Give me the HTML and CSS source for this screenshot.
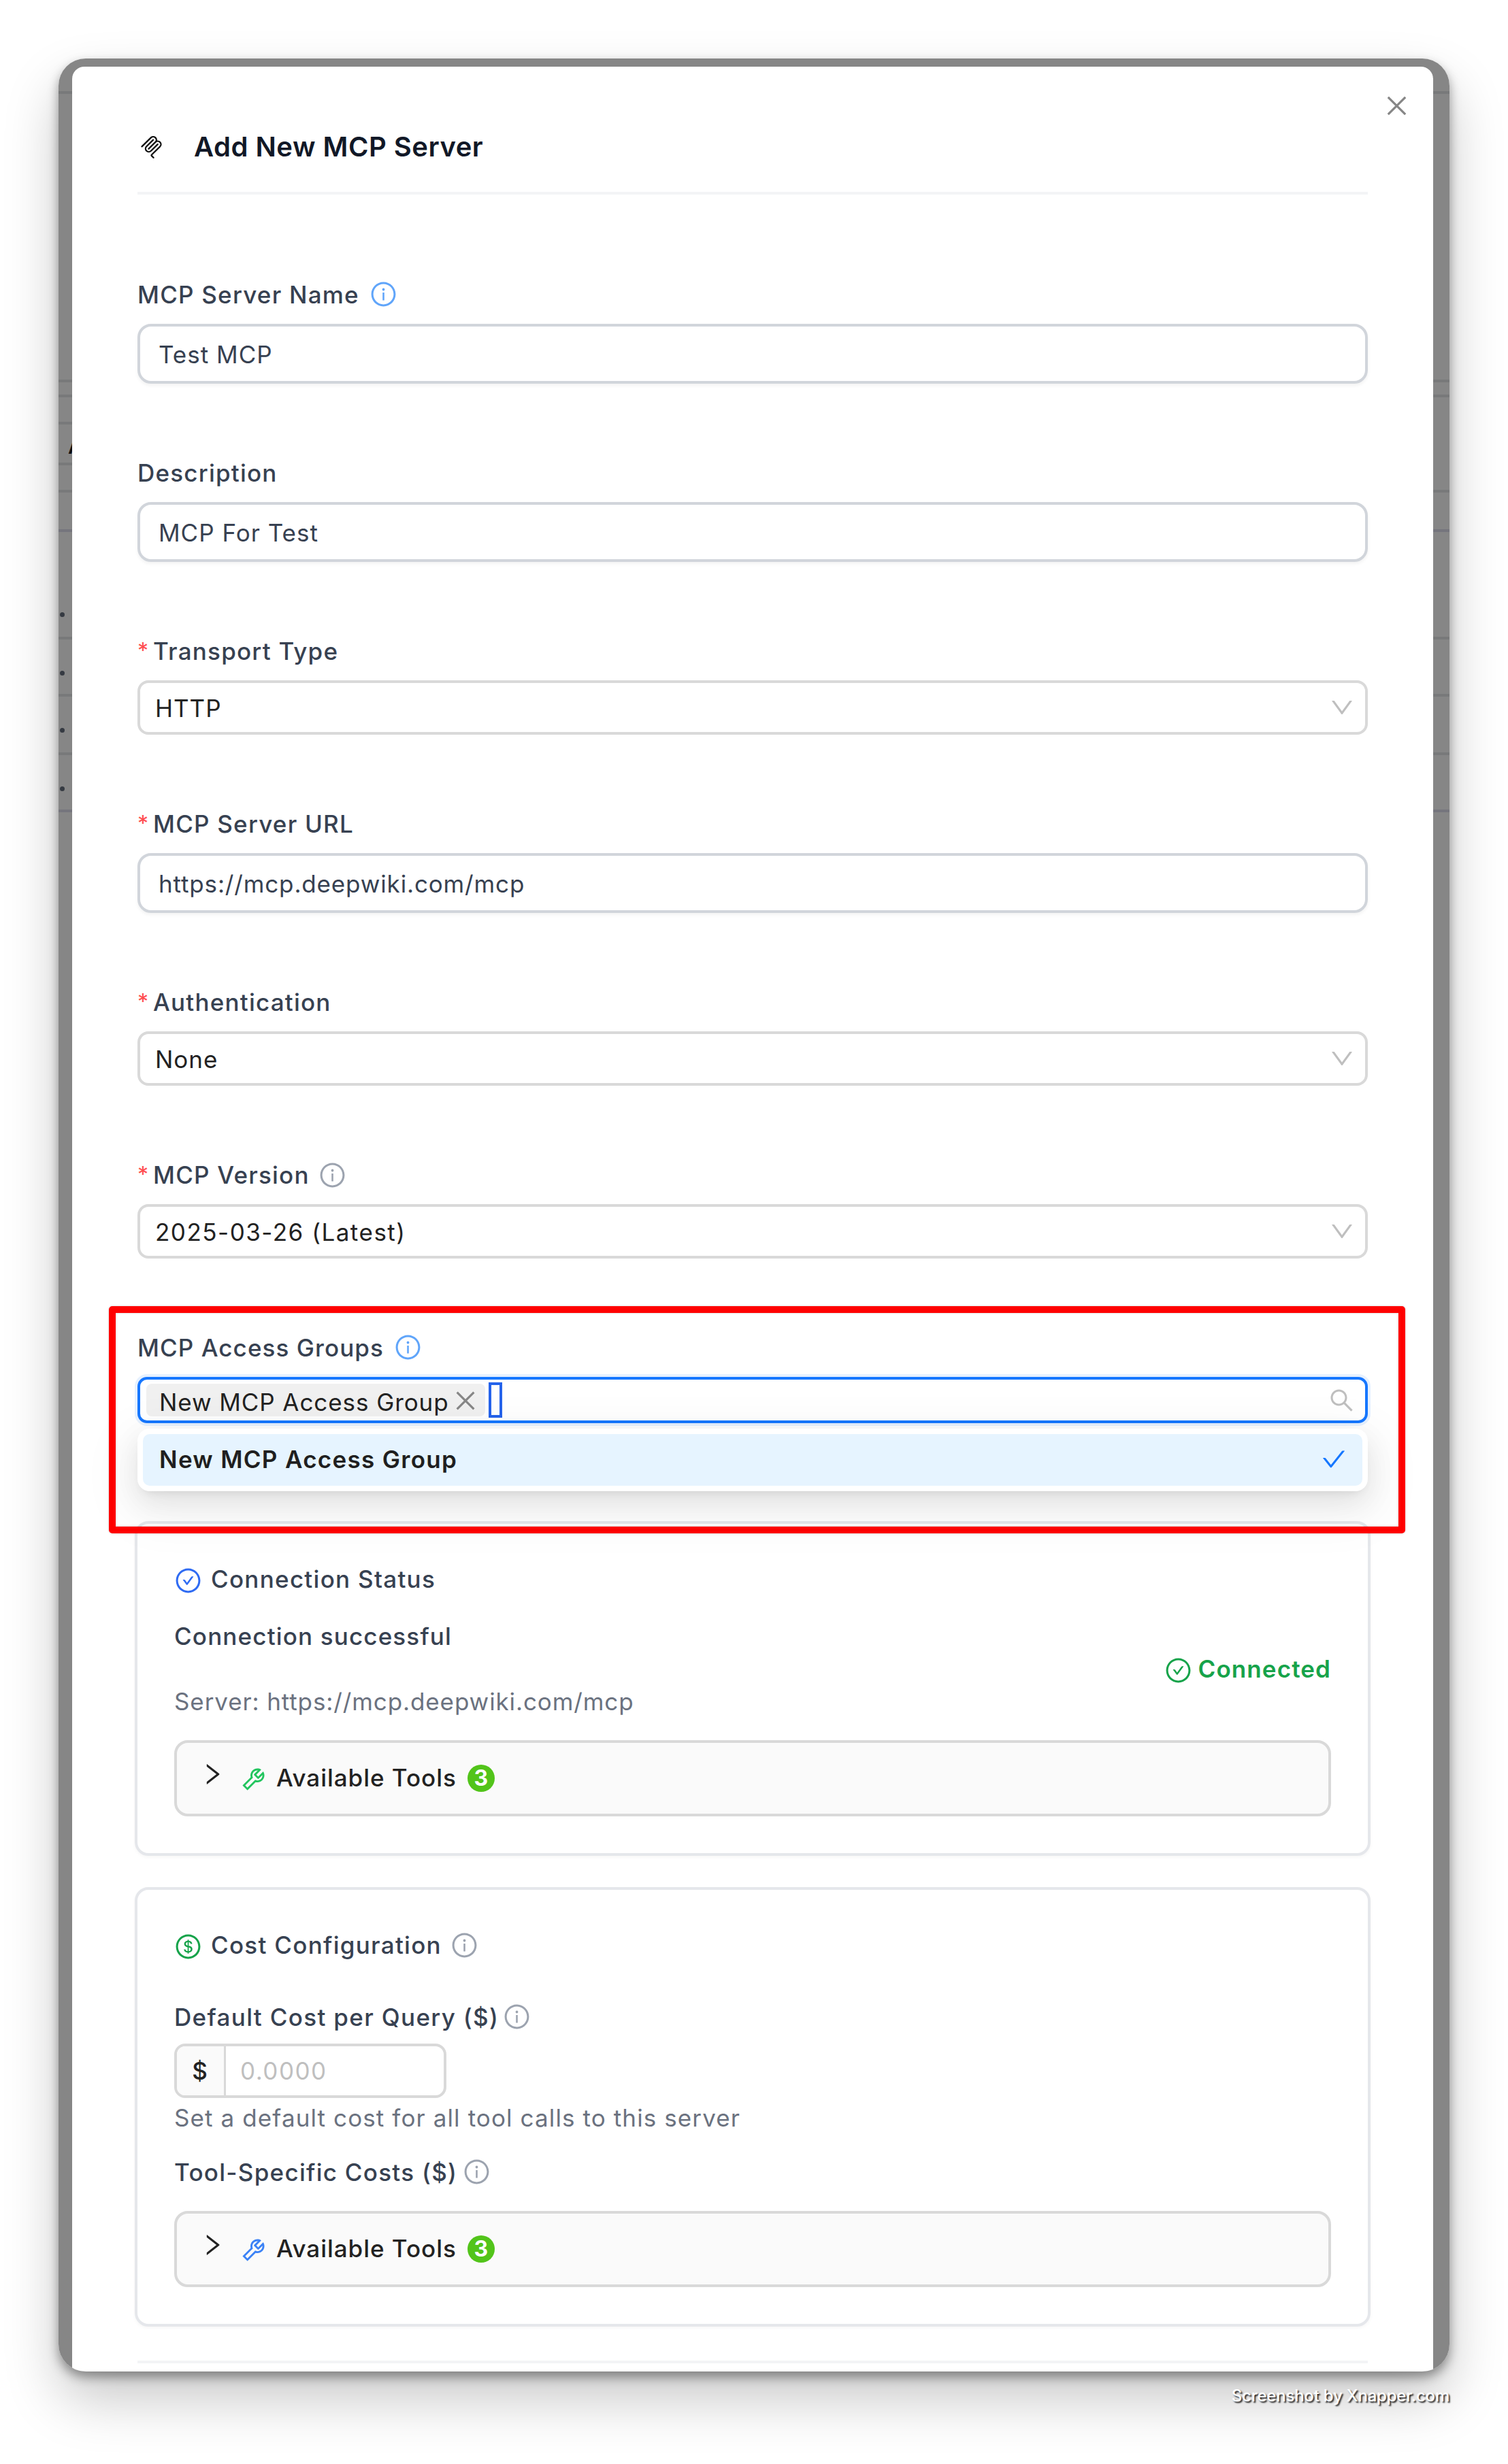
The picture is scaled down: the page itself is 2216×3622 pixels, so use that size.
FILE: index.html
```html
<!DOCTYPE html>
<html lang="en">
<head>
<meta charset="utf-8">
<title>Add New MCP Server</title>
<link rel="stylesheet" href="styles.css">
</head>
<body>
<svg class="sprite" aria-hidden="true">
  <symbol id="ring" viewBox="0 0 1024 1024"><path d="M512 64C264.6 64 64 264.6 64 512s200.6 448 448 448 448-200.6 448-448S759.4 64 512 64zm0 820c-205.4 0-372-166.6-372-372s166.6-372 372-372 372 166.6 372 372-166.6 372-372 372z"/></symbol>
  <symbol id="info" viewBox="0 0 1024 1024"><use href="#ring"/><path d="M464 336a48 48 0 1096 0 48 48 0 10-96 0zm72 112h-48c-4.4 0-8 3.6-8 8v272c0 4.4 3.6 8 8 8h48c4.4 0 8-3.6 8-8V456c0-4.4-3.6-8-8-8z"/></symbol>
  <symbol id="check-circle" viewBox="0 0 1024 1024"><use href="#ring"/><path d="M699 353h-46.9c-10.2 0-19.9 4.9-25.9 13.3L469 584.3l-71.2-98.8c-6-8.3-15.6-13.3-25.9-13.3H325c-6.5 0-10.3 7.4-6.5 12.7l124.6 172.8a31.8 31.8 0 0051.7 0l210.6-292c3.9-5.3.1-12.7-6.4-12.7z"/></symbol>
  <symbol id="dollar" viewBox="0 0 1024 1024"><use href="#ring"/><path d="M559.7 488.8l-25.4-5.9V348.6c38 5.2 61.5 29 65.5 58.2.5 4 3.9 6.9 7.9 6.9h44.9c4.7 0 8.4-4.1 8-8.8-6.1-62.3-57.4-102.3-125.9-109.2V263c0-4.4-3.6-8-8-8h-28.1c-4.4 0-8 3.6-8 8v33c-70.8 6.9-126.2 46-126.2 119 0 67.6 49.8 100.2 102.1 112.7l24.7 6.3v142.7c-44.2-5.9-69-29.5-74.1-61.3-.6-3.8-4-6.6-7.9-6.6H363c-4.7 0-8.4 4-8 8.7 4.5 55 46.2 105.6 135.2 112.1V761c0 4.4 3.6 8 8 8h28.4c4.4 0 8-3.6 8-8.1l-.2-31.7c78.3-6.9 134.3-48.8 134.3-124-.1-69.4-44.2-100.4-109-116.4zm-68.6-16.2c-5.6-1.6-10.3-3.1-15-5-33.8-12.2-49.5-31.9-49.5-57.3 0-36.3 27.5-57 64.5-61.7v124zM534.3 677V543.3c3.1.9 5.9 1.6 8.8 2.2 47.3 14.4 63.2 34.4 63.2 65.1 0 39.1-29.4 62.6-72 66.4z"/></symbol>
  <symbol id="down" viewBox="0 0 1024 1024"><path d="M884 256h-75c-5.1 0-9.9 2.5-12.9 6.6L512 654.2 227.9 262.6c-3-4.1-7.8-6.6-12.9-6.6h-75c-6.5 0-10.3 7.4-6.5 12.7l352.6 486.1c12.8 17.6 39 17.6 51.7 0l352.6-486.1c3.9-5.3.1-12.7-6.4-12.7z"/></symbol>
  <symbol id="right" viewBox="0 0 1024 1024"><path d="M765.7 486.8L314.9 134.7A7.97 7.97 0 00302 141v77.3c0 4.9 2.3 9.6 6.1 12.6l360 281.1-360 281.1c-3.9 3-6.1 7.7-6.1 12.6V883c0 6.7 7.7 10.4 12.9 6.3l450.8-352.1a31.96 31.96 0 000-50.4z"/></symbol>
  <symbol id="close" viewBox="0 0 1024 1024"><path d="M195 195L829 829M829 195L195 829" fill="none" stroke="currentColor" stroke-width="80"/></symbol>
  <symbol id="check" viewBox="0 0 1024 1024"><path d="M912 190h-69.9c-9.8 0-19.1 4.5-25.1 12.2L404.7 724.5 207 474a32 32 0 00-25.1-12.2H112c-6.7 0-10.4 7.7-6.3 12.9l273.9 347c12.8 16.2 37.4 16.2 50.3 0l488.4-618.9c4.1-5.1.4-12.8-6.3-12.8z"/></symbol>
  <symbol id="search" viewBox="0 0 1024 1024"><path d="M909.6 854.5L649.9 594.8C690.2 542.7 712 479 712 412c0-80.2-31.3-155.4-87.9-212.1-56.6-56.7-132-87.9-212.1-87.9s-155.5 31.3-212.1 87.9C143.2 256.5 112 331.8 112 412c0 80.1 31.3 155.5 87.9 212.1C256.5 680.8 331.8 712 412 712c67 0 130.6-21.8 182.7-62l259.7 259.6a8.2 8.2 0 0011.6 0l43.6-43.5a8.2 8.2 0 000-11.6zM570.4 570.4C528 612.7 471.8 636 412 636s-116-23.3-158.4-65.6C211.3 528 188 471.8 188 412s23.3-116.1 65.6-158.4C296 211.3 352.2 188 412 188s116.1 23.2 158.4 65.6S636 352.2 636 412s-23.3 116.1-65.6 158.4z"/></symbol>
  <symbol id="tool" viewBox="0 0 1024 1024"><path d="M876.6 239.5c-.5-.9-1.2-1.8-2-2.5-5-5-13.1-5-18.1 0L684.2 409.3l-67.9-67.9L788.7 169c.8-.8 1.4-1.6 2-2.5 3.6-6.1 1.6-13.9-4.5-17.5-98.2-58-226.8-44.7-311.3 39.7-67 67-89.2 162-66.5 247.4l-293 293c-3 3-2.8 7.9.3 11l169.7 169.7c3.1 3.1 8.1 3.3 11 .3l292.9-292.9c85.5 22.8 180.5.7 247.6-66.4 84.4-84.5 97.7-213.1 39.7-311.3zM786 499.8c-58.1 58.1-145.3 69.3-214.6 33.6l-8.8 8.8-.1-.1-274 274.1-79.2-79.2 230.1-230.1s0 .1.1.1l52.8-52.8c-35.7-69.3-24.5-156.5 33.6-214.6a184.2 184.2 0 01144-53.5L537 318.9a32.05 32.05 0 000 45.3l124.5 124.5a32.05 32.05 0 0045.3 0l132.8-132.8c3.7 51.8-14.4 104.8-53.6 143.9z"/></symbol>
  <symbol id="mcp" viewBox="0 0 24 24"><path d="M15.688 2.343a2.588 2.588 0 00-3.61 0l-9.626 9.44a.863.863 0 01-1.203 0 .823.823 0 010-1.18l9.626-9.44a4.313 4.313 0 016.016 0 4.116 4.116 0 011.204 3.54 4.3 4.3 0 013.609 1.18l.05.05a4.115 4.115 0 010 5.9l-8.706 8.537a.274.274 0 000 .393l1.788 1.754a.823.823 0 010 1.18.863.863 0 01-1.203 0l-1.788-1.753a1.92 1.92 0 010-2.754l8.706-8.538a2.47 2.47 0 000-3.54l-.05-.049a2.588 2.588 0 00-3.607-.003l-7.172 7.034-.002.002-.098.097a.863.863 0 01-1.204 0 .823.823 0 010-1.18l7.273-7.133a2.47 2.47 0 00-.003-3.537z"/><path d="M14.485 4.703a.823.823 0 000-1.18.863.863 0 00-1.204 0l-7.119 6.982a4.115 4.115 0 000 5.9 4.314 4.314 0 006.016 0l7.12-6.982a.823.823 0 000-1.18.863.863 0 00-1.204 0l-7.119 6.982a2.588 2.588 0 01-3.61 0 2.47 2.47 0 010-3.54l7.12-6.982z"/></symbol>
</svg>

<div class="window">
  <div class="backdrop">
    <i class="line" style="top:48px"></i>
    <i class="line" style="top:472px"></i>
    <i class="line" style="top:494px"></i>
    <i class="line line-left" style="top:534px"></i>
    <span class="behind">A</span>
    <i class="line line-left" style="top:594px"></i>
    <i class="line" style="top:634px"></i>
    <i class="line line-blue" style="top:692px"></i>
    <i class="dot" style="top:814px"></i>
    <i class="line" style="top:850px"></i>
    <i class="dot" style="top:900px"></i>
    <i class="line" style="top:934px"></i>
    <i class="dot" style="top:984px"></i>
    <i class="line" style="top:1020px"></i>
    <i class="dot" style="top:1070px"></i>
    <i class="line line-blue" style="top:1104px"></i>
  </div>

  <div class="modal">
    <svg class="icon modal-close"><use href="#close"/></svg>
    <header class="modal-header">
      <svg class="logo"><use href="#mcp"/></svg>
      <h1 class="modal-title">Add New MCP Server</h1>
    </header>

    <form class="form">
      <div class="field">
        <div class="label">MCP Server Name<svg class="icon info blue"><use href="#info"/></svg></div>
        <div class="input">Test MCP</div>
      </div>
      <div class="field">
        <div class="label">Description</div>
        <div class="input">MCP For Test</div>
      </div>
      <div class="field">
        <div class="label"><span class="required">*</span>Transport Type</div>
        <div class="select">HTTP<svg class="icon arrow"><use href="#down"/></svg></div>
      </div>
      <div class="field">
        <div class="label"><span class="required">*</span>MCP Server URL</div>
        <div class="input url">https://mcp.deepwiki.com/mcp</div>
      </div>
      <div class="field">
        <div class="label"><span class="required">*</span>Authentication</div>
        <div class="select">None<svg class="icon arrow"><use href="#down"/></svg></div>
      </div>
      <div class="field">
        <div class="label version"><span class="required">*</span>MCP Version<svg class="icon info"><use href="#info"/></svg></div>
        <div class="select wide">2025-03-26 (Latest)<svg class="icon arrow"><use href="#down"/></svg></div>
      </div>
      <div class="field groups">
        <div class="label tight">MCP Access Groups<svg class="icon info blue"><use href="#info"/></svg></div>
        <div class="multi">
          <span class="tag">New MCP Access Group<svg class="icon tag-close"><use href="#close"/></svg></span>
          <span class="caret"></span>
          <svg class="icon search"><use href="#search"/></svg>
        </div>
        <div class="dropdown">
          <div class="option">New MCP Access Group<svg class="icon option-check"><use href="#check"/></svg></div>
        </div>
      </div>

      <section class="card">
        <h2 class="card-title"><svg class="icon link"><use href="#check-circle"/></svg>Connection Status</h2>
        <div class="status">
          <div class="status-text">
            <div class="status-main">Connection successful</div>
            <div class="status-server">Server: https://mcp.deepwiki.com/mcp</div>
          </div>
          <div class="connected"><svg class="icon"><use href="#check-circle"/></svg>Connected</div>
        </div>
        <div class="collapse">
          <svg class="icon chevron"><use href="#right"/></svg>
          <svg class="icon wrench green"><use href="#tool"/></svg>
          <span class="tools">Available Tools</span>
          <span class="badge">3</span>
        </div>
      </section>

      <section class="card">
        <h2 class="card-title"><svg class="icon money"><use href="#dollar"/></svg>Cost Configuration<svg class="icon info near"><use href="#info"/></svg></h2>
        <div class="cost-label first">Default Cost per Query ($)<svg class="icon info"><use href="#info"/></svg></div>
        <div class="money-input"><span class="addon">$</span><span class="placeholder">0.0000</span></div>
        <div class="help">Set a default cost for all tool calls to this server</div>
        <div class="cost-label second">Tool-Specific Costs ($)<svg class="icon info"><use href="#info"/></svg></div>
        <div class="collapse">
          <svg class="icon chevron"><use href="#right"/></svg>
          <svg class="icon wrench azure"><use href="#tool"/></svg>
          <span class="tools">Available Tools</span>
          <span class="badge">3</span>
        </div>
      </section>
      <div class="footer-rule"></div>
    </form>
  </div>
</div>

<div class="highlight"></div>
<div class="watermark">Screenshot by Xnapper.com</div>
</body>
</html>
```
FILE: styles.css
```css
* { box-sizing: border-box; }

body {
  position: relative;
  margin: 0;
  width: 2216px;
  height: 3622px;
  padding: 86px;
  overflow: hidden;
  background: #fff;
  font-family: Inter, "Liberation Sans", sans-serif;
  font-size: 35px;
  line-height: 50px;
  color: #374151;
}

.sprite { position: absolute; width: 0; height: 0; }

.window {
  position: relative;
  width: 2044px;
  height: 3400px;
  padding: 12px 24px 0 20px;
  overflow: hidden;
  border-radius: 40px;
  background: #868686;
}

body::before {
  content: "";
  position: absolute;
  left: 86px;
  top: 86px;
  width: 2044px;
  height: 3400px;
  border-radius: 40px;
  box-shadow: 0 8px 16px rgba(0, 0, 0, .38), 0 40px 80px rgba(0, 0, 0, .22);
}

/* dimmed page showing at both sides of the modal */
.backdrop { position: absolute; inset: 0; }
.line { position: absolute; left: 0; right: 0; height: 4px; background: #78797a; }
.line-left { right: auto; width: 30px; }
.line-blue { background: #75757d; }
.dot { position: absolute; left: 2px; width: 7px; height: 7px; border-radius: 50%; background: #353a42; }
.behind { position: absolute; left: 14px; top: 545px; font-size: 30px; font-weight: 600; color: #0b0d10; }

.modal {
  position: relative;
  height: 3440px;
  padding: 0 96px;
  border-radius: 18px;
  background: #fff;
}
.modal-close { position: absolute; right: 33px; top: 37px; color: #868686; }

.modal-header {
  display: flex;
  align-items: center;
  height: 188px;
  padding: 52px 0 0 4px;
  border-bottom: 4px solid #f3f4f6;
}
.logo { width: 33px; height: 33px; margin-right: 46px; fill: #111; }
.modal-title { margin: 0; font-size: 40px; line-height: 60px; font-weight: 600; letter-spacing: .5px; color: #111827; }

.icon { flex: none; display: block; width: 41px; height: 41px; fill: currentColor; }

.form { padding-top: 16px; }
.field { margin-top: 101px; }
.label {
  display: flex;
  align-items: center;
  height: 60px;
  margin-bottom: 13px;
  font-weight: 500;
  letter-spacing: 1.22px;
}
.label.tight { letter-spacing: 1.08px; }
.required { width: 23px; font-size: 32px; line-height: 50px; font-weight: 400; letter-spacing: 0; color: #ff4d4f; }
.info { color: #9ca3af; }
.label .info { margin: -2px 0 0 15px; }
.label.version .info { margin: 0 0 0 13px; }
.blue { color: #60a5fa; }

.input, .select { display: flex; align-items: center; letter-spacing: 1px; }
.input {
  height: 88px;
  padding: 1px 27px 0;
  border: 4px solid #d1d5db;
  border-radius: 20px;
  box-shadow: 0 3px 5px rgba(0, 0, 0, .05);
}
.url { letter-spacing: .85px; }
.select {
  justify-content: space-between;
  height: 80px;
  padding: 2px 14px 0 22px;
  border: 4px solid #d9d9d9;
  border-radius: 16px;
  color: #222;
}
.wide { letter-spacing: 1.5px; }
.arrow { width: 40px; height: 40px; margin-top: -2px; color: #bfbfbf; }

.groups { position: relative; }
.multi {
  display: flex;
  align-items: center;
  height: 68px;
  padding: 0 14px 0 9px;
  border: 4px solid #1677ff;
  border-radius: 14px;
  box-shadow: 0 0 0 4px #e6f1ff;
}
.tag {
  display: flex;
  align-items: center;
  height: 48px;
  padding: 5px 9px 0 19px;
  border-radius: 8px;
  background: #f0f0f0;
  color: #222;
  letter-spacing: .92px;
}
.tag-close { width: 40px; height: 40px; margin: -4px 0 0 4px; color: #868686; }
.caret { width: 20px; height: 52px; margin-left: 5px; border: 4px solid #2563eb; }
.search { margin-left: auto; color: #bfbfbf; }

.dropdown {
  position: absolute;
  z-index: 2;
  left: 0;
  right: 0;
  top: 149px;
  padding: 8px;
  border-radius: 18px;
  background: #fff;
  box-shadow: 0 15px 40px rgba(0, 0, 0, .08), 0 8px 15px -10px rgba(0, 0, 0, .14), 0 22px 70px 20px rgba(0, 0, 0, .05);
}
.option {
  display: flex;
  align-items: center;
  justify-content: space-between;
  height: 76px;
  padding: 0 22px 2px 24px;
  border-radius: 10px;
  background: #e6f4ff;
  color: #1f1f1f;
  font-weight: 600;
  letter-spacing: 1.31px;
}
.option-check { width: 40px; height: 40px; color: #1677ff; }

.card {
  margin: 46px -4px 0;
  padding: 56px 54px 54px;
  border: 4px solid #e5e7eb;
  border-radius: 20px;
  box-shadow: 0 2px 5px rgba(0, 0, 0, .04);
}
.groups + .card { margin-top: 144px; }
.card-title { display: flex; align-items: center; height: 50px; margin: 0; font-size: 35px; font-weight: 500; letter-spacing: 1.28px; }
.card-title .icon:first-child { margin: 4px 13px 0 0; }
.near { margin-left: 13px; }
.link { color: #2f6bf3; }
.money { color: #16a34a; }

.status { display: flex; align-items: center; justify-content: space-between; margin: 34px 0 32px; }
.status-text { display: grid; gap: 46px; }
.status-main { font-weight: 500; letter-spacing: 1.16px; }
.status-server { letter-spacing: .89px; color: #6b7280; }
.connected { display: flex; align-items: center; gap: 9px; font-weight: 600; letter-spacing: 1.1px; color: #16a34a; }
.connected .icon { margin-top: 4px; }

.collapse {
  display: flex;
  align-items: center;
  height: 112px;
  padding-left: 32px;
  border: 4px solid #d9d9d9;
  border-radius: 20px;
  background: #fafafa;
  color: #222;
}
.chevron { width: 40px; height: 40px; margin-bottom: 13px; }
.wrench { margin: 3px 13px 0 20px; }
.green { color: #22c55e; }
.azure { color: #3b82f6; }
.tools { margin-top: -2px; font-weight: 500; letter-spacing: .98px; }
.badge {
  width: 40px;
  height: 40px;
  margin-left: 16px;
  border-radius: 50%;
  background: #52c41a;
  color: #fff;
  font-size: 32px;
  line-height: 40px;
  font-weight: 700;
  text-align: center;
}

.cost-label { display: flex; align-items: center; height: 50px; font-weight: 500; letter-spacing: 1.34px; }
.cost-label .info { margin: -2px 0 0 6px; }
.first { margin: 56px 0 14px; }
.second { margin: 30px 0 32px; letter-spacing: 1.28px; }
.second .info { margin-left: 8px; }
.money-input {
  display: flex;
  align-items: stretch;
  width: 400px;
  height: 80px;
  border: 4px solid #d9d9d9;
  border-radius: 16px;
  overflow: hidden;
  line-height: 73px;
}
.addon { width: 72px; padding-right: 2px; border-right: 3px solid #d9d9d9; background: #fafafa; color: #222; text-align: center; font-weight: 500; }
.placeholder { padding-left: 21px; color: #bfbfbf; letter-spacing: 1.47px; }
.help { margin-top: 4px; letter-spacing: 1.11px; color: #6b7280; }
.footer-rule { height: 4px; margin-top: 50px; background: #f3f4f6; }

.highlight {
  position: absolute;
  left: 160px;
  top: 1920px;
  width: 1905px;
  height: 334px;
  border: 10px solid #f00;
  border-radius: 5px;
  box-shadow: 0 0 3px rgba(0, 0, 0, .2), inset 0 0 3px rgba(0, 0, 0, .2);
}
.watermark {
  position: absolute;
  right: 86px;
  top: 3507px;
  font-size: 24px;
  line-height: 30px;
  font-weight: 500;
  letter-spacing: -.2px;
  color: #fff;
  text-shadow: 2px 2px 2px rgba(0, 0, 0, .85);
}
```
